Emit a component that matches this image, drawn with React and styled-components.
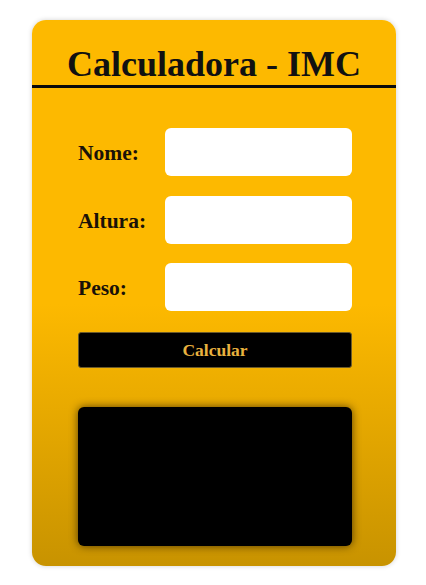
import React from "react";
import styled, { createGlobalStyle } from "styled-components";

const Global = createGlobalStyle`
  html, body { margin: 0; padding: 0; background: #ffffff; }
  body { font-family: "Liberation Serif", "Times New Roman", serif; }
  * { box-sizing: border-box; }
`;

const Page = styled.div`
  width: 426px;
  height: 585px;
  padding: 20px 30px 19px 32px;
  display: flex;
`;

const Card = styled.div`
  width: 364px;
  height: 546px;
  border-radius: 14px;
  background: linear-gradient(to bottom, #fdb900 0%, #fdb900 52%, #c89300 100%);
  box-shadow: 0 0 5px rgba(0, 0, 0, 0.18);
  display: flex;
  flex-direction: column;
  overflow: hidden;
`;

const Header = styled.header`
  height: 69px;
  border-bottom: 3px solid #0a0a0a;
  padding-top: 26px;
  text-align: center;
`;

const Title = styled.h1`
  margin: 0;
  font-family: "Liberation Serif", "Times New Roman", serif;
  font-weight: bold;
  font-size: 36px;
  color: #111;
  line-height: 1;
`;

const Body = styled.div`
  padding: 40px 44px 20px 46px;
  display: flex;
  flex-direction: column;
  flex: 1;
`;

const Fields = styled.div`
  display: flex;
  flex-direction: column;
  gap: 19.5px;
`;

const Row = styled.div`
  display: flex;
  align-items: center;
  justify-content: space-between;
`;

const Label = styled.label`
  font-family: "Liberation Serif", "Times New Roman", serif;
  font-weight: bold;
  font-size: 21.5px;
  color: #1a1208;
  padding-top: 3px;
`;

const Input = styled.input`
  width: 187px;
  height: 48px;
  border: none;
  border-radius: 6px;
  background: #ffffff;
  outline: none;
  padding: 0 10px;
  font-size: 16px;
`;

const Button = styled.button`
  margin-top: 21px;
  height: 36px;
  width: 100%;
  background: #000;
  border: 1px solid #6b5a2a;
  border-radius: 3px;
  color: #e9b23f;
  font-family: "Liberation Serif", "Times New Roman", serif;
  font-weight: bold;
  font-size: 17.5px;
  cursor: pointer;
`;

const Result = styled.div`
  margin-top: 39px;
  height: 139px;
  background: #000;
  border-radius: 6px;
  box-shadow: 0 0 8px rgba(40, 25, 0, 0.75);
`;

export default function App() {
  return (
    <>
      <Global />
      <Page>
        <Card>
          <Header>
            <Title>Calculadora - IMC</Title>
          </Header>
          <Body>
            <Fields>
              <Row>
                <Label htmlFor="nome">Nome:</Label>
                <Input id="nome" type="text" />
              </Row>
              <Row>
                <Label htmlFor="altura">Altura:</Label>
                <Input id="altura" type="text" />
              </Row>
              <Row>
                <Label htmlFor="peso">Peso:</Label>
                <Input id="peso" type="text" />
              </Row>
            </Fields>
            <Button type="button">Calcular</Button>
            <Result />
          </Body>
        </Card>
      </Page>
    </>
  );
}
